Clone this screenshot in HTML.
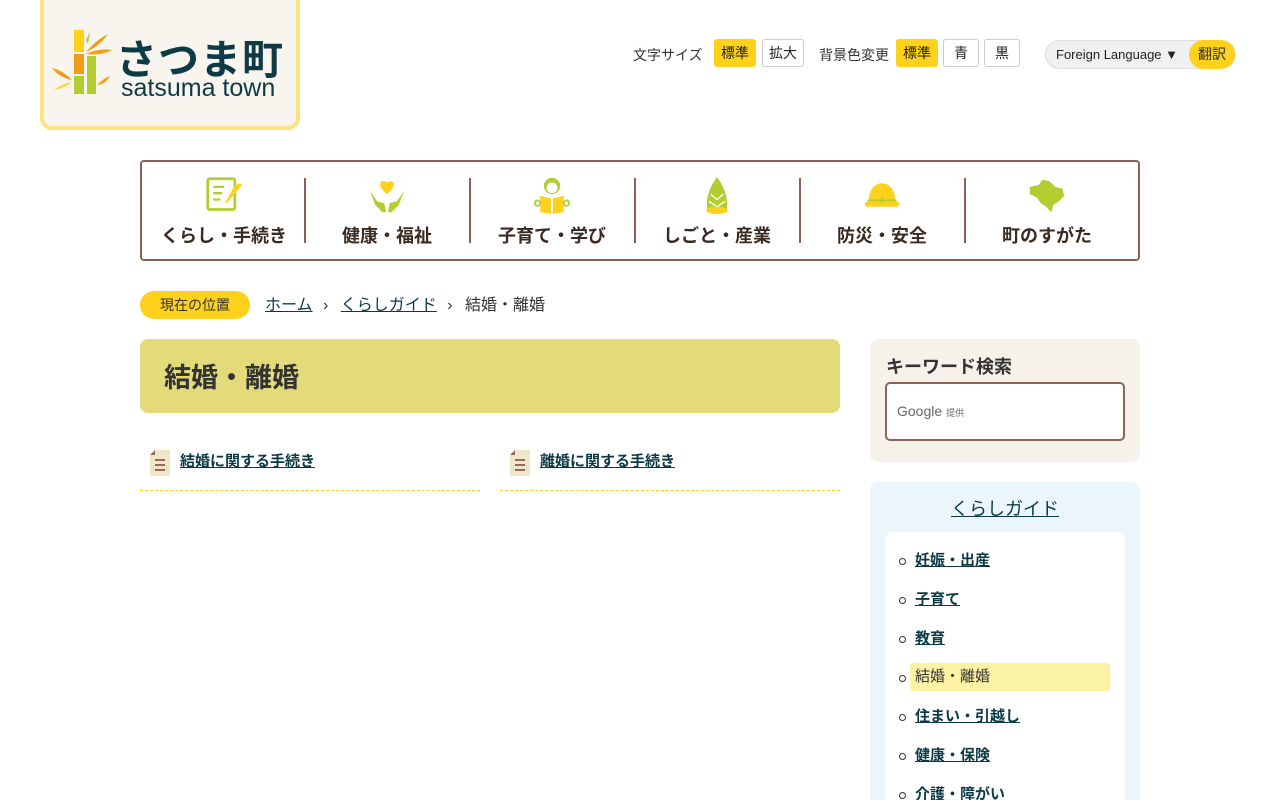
<!DOCTYPE html>
<html lang="ja"><head><meta charset="utf-8">
<style>
*{box-sizing:border-box;margin:0;padding:0}
html,body{width:1280px;height:800px;overflow:hidden}
body{background:#fff;font-family:"Liberation Sans","Noto Sans CJK JP",sans-serif;color:#333;position:relative}
a{color:#0b3a45;text-decoration:underline}
.logo{position:absolute;left:40px;top:-10px;width:260px;height:140px;background:#f8f4ee;border:4px solid #fde183;border-radius:0 0 12px 12px}
.logo .t1{position:absolute;left:72px;top:32px;font-size:41px;font-weight:bold;color:#0e3a46;letter-spacing:1px}
.logo .t2{position:absolute;left:77px;top:80px;font-size:25px;color:#0e3a46}
.tb{position:absolute;top:39px;font-size:14px;color:#333}
.btn{position:absolute;top:39px;height:28px;border:1px solid #ccc;border-radius:3px;background:#fff;font-size:14px;line-height:26px;text-align:center;color:#222}
.btn.on{background:#fdd11c;border-color:#fdd11c}
.fl{position:absolute;left:1045px;top:40px;width:191px;height:29px;border:1px solid #ddd;border-radius:15px;background:#f0f0f0;font-size:13px;line-height:27px;padding-left:10px;color:#222}
.fl b{position:absolute;right:0;top:-1px;width:46px;height:29px;border-radius:15px;background:#fdd11c;font-weight:normal;font-size:14px;text-align:center;line-height:29px;color:#333}
.nav{position:absolute;left:140px;top:160px;width:1000px;height:101px;border:2px solid #8a5f55;border-radius:4px}
.nav div{position:absolute;top:14px;width:164px;text-align:center}
.nav div.d:before{content:"";position:absolute;left:-1px;top:2px;height:65px;border-left:2px solid #8a5f55}
.nav svg{display:block;margin:0 auto;height:38px}
.nav span{display:block;font-size:18px;font-weight:bold;color:#3a2a22;margin-top:8px}
.bc{position:absolute;top:291px;left:140px;font-size:16px}
.bc .here{display:inline-block;width:110px;height:28px;border-radius:14px;background:#fdd11c;text-align:center;line-height:28px;font-size:14px;color:#333;margin-right:15px}
.bc a{margin-right:6px}.bc i{font-style:normal;margin-right:8px}
h1{position:absolute;left:140px;top:339px;width:700px;height:74px;background:#e3db79;border-radius:8px;font-size:27px;padding:17px 24px;color:#333}
.link{position:absolute;top:450px;width:340px;height:41px;border-bottom:1px dashed #fdd11c;font-size:15px;font-weight:bold;padding-left:40px;line-height:24px}
.link svg{position:absolute;left:10px;top:0}
.kw{position:absolute;left:870px;top:339px;width:270px;height:123px;background:#f6f2ea;border-radius:8px}
.kw h2{position:absolute;left:16px;top:14px;font-size:18px;color:#333}
.kw .in{position:absolute;left:15px;top:43px;width:240px;height:59px;border:2px solid #8a6558;border-radius:5px;background:#fff;font-size:14px;color:#666;padding:19px 10px}
.kw .in small{font-size:9px;margin-left:4px}
.side{position:absolute;left:870px;top:482px;width:270px;height:330px;background:#ebf6fc;border-radius:8px}
.side h3{text-align:center;font-size:18px;font-weight:normal;margin-top:13px}
.side ul{position:absolute;left:15px;top:50px;width:240px;height:300px;background:#fff;border-radius:8px;list-style:none;padding-top:17px}
.side li{position:relative;height:39px;padding-left:30px;font-size:15px;font-weight:bold;line-height:24px}
.side li:before{content:"";position:absolute;left:14px;top:9px;width:5px;height:5px;border:1.5px solid #333;border-radius:50%}
.side li.cur{font-weight:normal}
.side li.cur span{position:absolute;left:25px;top:-3px;width:200px;height:28px;background:#fcf2a4;border-radius:3px;padding-left:5px;line-height:28px}
</style></head><body>
<div class="logo">
<svg style="position:absolute;left:8px;top:36px" width="60" height="70" viewBox="0 0 60 70">
<rect x="22" y="0" width="10" height="22" fill="#fdd11c"/><rect x="22" y="24" width="10" height="20" fill="#ef9e1b"/><rect x="22" y="46" width="10" height="18" fill="#b3cd30"/>
<rect x="35" y="26" width="9" height="38" fill="#b3cd30"/>
<path d="M34 22 Q44 10 56 4 Q48 16 34 22Z" fill="#ef9e1b"/><path d="M34 24 Q46 18 60 20 Q48 26 34 24Z" fill="#ef9e1b"/>
<path d="M20 50 Q10 40 0 38 Q8 48 20 50Z" fill="#ef9e1b"/><path d="M20 52 Q10 54 2 60 Q12 58 20 52Z" fill="#fdd11c"/>
<path d="M45 55 Q52 48 58 46 Q54 54 45 55Z" fill="#ef9e1b"/><path d="M34 10 L38 2 L36 14Z" fill="#b3cd30"/>
</svg>
<div class="t1">さつま町</div><div class="t2">satsuma town</div>
</div>
<div class="tb" style="left:633px;top:45px">文字サイズ</div>
<div class="btn on" style="left:714px;width:42px">標準</div>
<div class="btn" style="left:762px;width:42px">拡大</div>
<div class="tb" style="left:819px;top:45px">背景色変更</div>
<div class="btn on" style="left:896px;width:42px">標準</div>
<div class="btn" style="left:943px;width:36px">青</div>
<div class="btn" style="left:984px;width:36px">黒</div>
<div class="fl">Foreign Language ▼<b>翻訳</b></div>

<div class="nav">
<div style="left:0"><svg viewBox="0 0 42 42" width="42"><rect x="3" y="3" width="30" height="34" rx="2" fill="none" stroke="#b3cd30" stroke-width="3"/><path d="M9 12h12M9 19h10M9 26h8" stroke="#b3cd30" stroke-width="2.5"/><path d="M22 30 L32 12 Q38 6 41 10 L24 30Z" fill="#fdd11c"/></svg><span>くらし・手続き</span></div>
<div class="d" style="left:163px"><svg viewBox="0 0 42 42" width="42"><path d="M21 20 C10 12 12 2 21 7 C30 2 32 12 21 20Z" fill="#fdd11c"/><path d="M2 16 L10 28 L18 30 L20 40 L16 40 L8 32 Z M40 16 L32 28 L24 30 L22 40 L26 40 L34 32Z" fill="#b3cd30"/></svg><span>健康・福祉</span></div>
<div class="d" style="left:328px"><svg viewBox="0 0 42 42" width="42"><circle cx="21" cy="11" r="9" fill="#b3cd30"/><circle cx="21" cy="13" r="6" fill="#fff"/><path d="M8 22 L21 25 L34 22 L34 40 L21 42 L8 40Z" fill="#fdd11c"/><path d="M21 25v17" stroke="#fff" stroke-width="2"/><circle cx="5" cy="30" r="3" fill="none" stroke="#b3cd30" stroke-width="2"/><circle cx="37" cy="30" r="3" fill="none" stroke="#b3cd30" stroke-width="2"/></svg><span>子育て・学び</span></div>
<div class="d" style="left:493px"><svg viewBox="0 0 42 42" width="42"><path d="M21 1 C12 14 9 24 10 36 L32 36 C33 24 30 14 21 1Z" fill="#b3cd30"/><path d="M14 20 L21 26 L28 20 M12 28 L21 34 L30 28" stroke="#fff" stroke-width="1.5" fill="none"/><ellipse cx="21" cy="38" rx="12" ry="4" fill="#fdd11c"/></svg><span>しごと・産業</span></div>
<div class="d" style="left:658px"><svg viewBox="0 0 42 42" width="42"><path d="M6 30 C6 14 14 8 21 8 C28 8 36 14 36 30Z" fill="#fdd11c"/><rect x="2" y="28" width="38" height="6" rx="3" fill="#fdd11c"/><path d="M5 27h32" stroke="#b3cd30" stroke-width="2"/><path d="M21 23v7" stroke="#b3cd30" stroke-width="2"/></svg><span>防災・安全</span></div>
<div class="d" style="left:823px"><svg viewBox="0 0 42 42" width="42"><path d="M2 12 L12 10 L16 4 L24 6 L30 12 L38 14 L40 22 L34 28 L28 32 L26 40 L20 34 L14 30 L10 24 L2 20Z" fill="#b3cd30"/></svg><span>町のすがた</span></div>
</div>

<div class="bc"><span class="here">現在の位置</span><a>ホーム</a> <i>›</i> <a>くらしガイド</a> <i>›</i> 結婚・離婚</div>
<h1>結婚・離婚</h1>
<div class="link" style="left:140px"><svg width="20" height="26" viewBox="0 0 20 26"><path d="M5 0h15v26H0V5Z" fill="#f0e6c8"/><path d="M5 0v5H0" fill="#9a6a5a"/><path d="M5 10h10M5 15h10M5 20h10" stroke="#9a6a5a" stroke-width="2"/></svg><a>結婚に関する手続き</a></div>
<div class="link" style="left:500px"><svg width="20" height="26" viewBox="0 0 20 26"><path d="M5 0h15v26H0V5Z" fill="#f0e6c8"/><path d="M5 0v5H0" fill="#9a6a5a"/><path d="M5 10h10M5 15h10M5 20h10" stroke="#9a6a5a" stroke-width="2"/></svg><a>離婚に関する手続き</a></div>

<div class="kw"><h2>キーワード検索</h2><div class="in">Google<small>提供</small></div></div>
<div class="side"><h3><a>くらしガイド</a></h3>
<ul>
<li><a>妊娠・出産</a></li><li><a>子育て</a></li><li><a>教育</a></li>
<li class="cur"><span>結婚・離婚</span></li>
<li><a>住まい・引越し</a></li><li><a>健康・保険</a></li><li><a>介護・障がい</a></li>
</ul></div>
</body></html>
